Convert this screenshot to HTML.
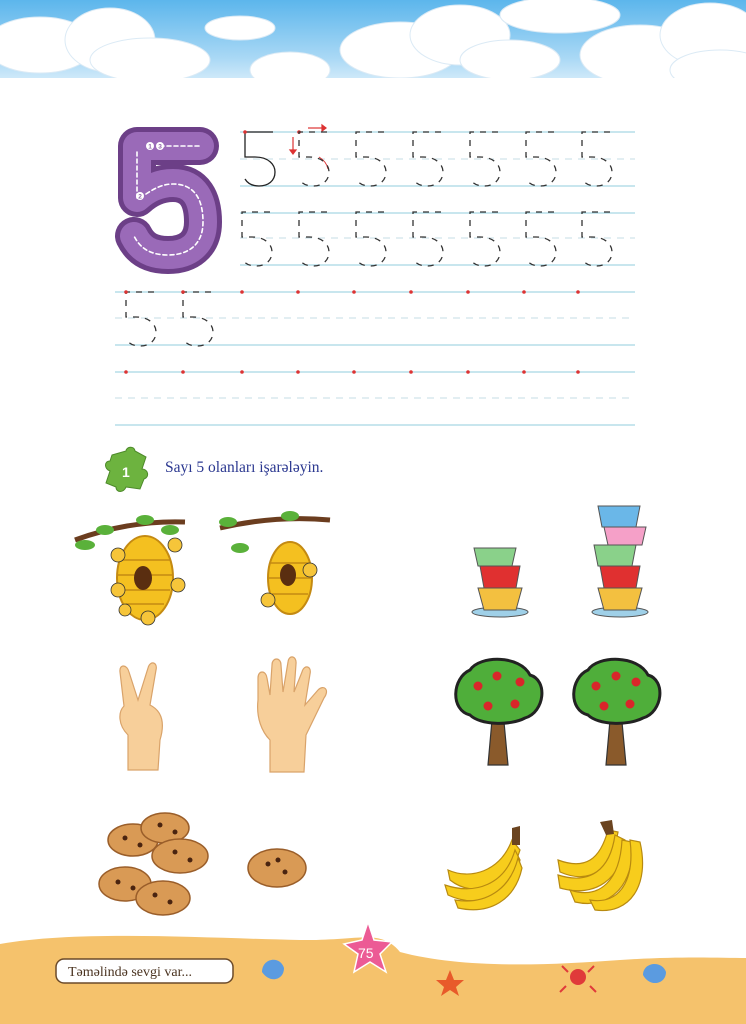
<!DOCTYPE html>
<html><head><meta charset="utf-8"><style>
html,body{margin:0;padding:0}
body{width:746px;height:1024px;position:relative;overflow:hidden;background:#fff;font-family:"Liberation Sans",sans-serif}
.abs{position:absolute}
</style></head><body>
<svg class="abs" style="left:0;top:0" width="746" height="1024" viewBox="0 0 746 1024">
<defs>
<linearGradient id="sky" x1="0" y1="0" x2="0" y2="1">
<stop offset="0" stop-color="#5cb6ec"/><stop offset="0.55" stop-color="#a9d8f5"/><stop offset="1" stop-color="#ffffff"/>
</linearGradient>
<g id="d5" fill="none" stroke="#333" stroke-width="1.3" stroke-dasharray="6,6">
<path d="M28,0 H0 V25 H10 C24,25 30,33 30,40 C30,49 23,54 14,54 C8,54 3,52 0,47"/>
</g>
</defs>
<rect x="0" y="0" width="746" height="105" fill="url(#sky)"/>
<g fill="#fff" stroke="#dbeaf5" stroke-width="1">
<ellipse cx="40" cy="45" rx="55" ry="28"/><ellipse cx="110" cy="40" rx="45" ry="32"/><ellipse cx="150" cy="60" rx="60" ry="22"/>
<ellipse cx="240" cy="28" rx="35" ry="12"/><ellipse cx="290" cy="70" rx="40" ry="18"/>
<ellipse cx="400" cy="50" rx="60" ry="28"/><ellipse cx="460" cy="35" rx="50" ry="30"/><ellipse cx="510" cy="60" rx="50" ry="20"/>
<ellipse cx="560" cy="15" rx="60" ry="18"/><ellipse cx="640" cy="55" rx="60" ry="30"/><ellipse cx="710" cy="35" rx="50" ry="32"/><ellipse cx="720" cy="70" rx="50" ry="20"/>
</g>
<rect x="0" y="78" width="746" height="30" fill="#fff"/>
<!-- lines -->
<g stroke="#a8d6e4" stroke-width="1.2">
<line x1="240" y1="132" x2="635" y2="132"/><line x1="240" y1="186" x2="635" y2="186"/>
<line x1="240" y1="213" x2="635" y2="213"/><line x1="240" y1="265" x2="635" y2="265"/>
<line x1="115" y1="292" x2="635" y2="292"/><line x1="115" y1="345" x2="635" y2="345"/>
<line x1="115" y1="372" x2="635" y2="372"/><line x1="115" y1="425" x2="635" y2="425"/>
</g>
<g stroke="#c6dde6" stroke-width="1" stroke-dasharray="7,6">
<line x1="240" y1="159" x2="635" y2="159"/><line x1="240" y1="238" x2="635" y2="238"/>
<line x1="115" y1="318" x2="635" y2="318"/><line x1="115" y1="398" x2="635" y2="398"/>
</g>
<!-- big 5 -->
<g fill="none" stroke-linecap="round" stroke-linejoin="round">
<path d="M200,146 H137 V198 C150,186 163,183 173,183 C195,183 203,200 203,222 C203,245 188,255 168,255 C150,255 140,248 134,236" stroke="#6c3f87" stroke-width="38"/>
<path d="M200,146 H137 V198 C150,186 163,183 173,183 C195,183 203,200 203,222 C203,245 188,255 168,255 C150,255 140,248 134,236" stroke="#9a6ab8" stroke-width="28"/>
<path d="M160,146 H200 M137,152 V198 M146,194 C155,188 163,184 173,184 C195,184 203,200 203,222 C203,245 188,255 168,255 C150,255 140,248 134,236" stroke="#fff" stroke-width="1.6" stroke-dasharray="4,3"/>
</g>
<g fill="#fff" font-size="7" font-weight="bold"><circle cx="150" cy="146" r="4"/><circle cx="160" cy="146" r="4"/><circle cx="140" cy="196" r="4"/></g>
<g fill="#8e5fa8" font-size="6.5" font-weight="bold" text-anchor="middle"><text x="150" y="148.5">1</text><text x="160" y="148.5">3</text><text x="140" y="198.5">2</text></g>
<!-- row 1 -->
<path d="M273,132 H245 V157 H255 C269,157 275,165 275,172 C275,181 268,186 259,186 C253,186 248,184 245,179" fill="none" stroke="#222" stroke-width="1.3"/>
<circle cx="245" cy="132" r="1.8" fill="#d33"/>
<g stroke="#d33" stroke-width="1.2" fill="#d33"><line x1="308" y1="128" x2="322" y2="128"/><path d="M322,125 L326,128 L322,131Z"/>
<line x1="293" y1="137" x2="293" y2="150"/><path d="M290,150 L293,154 L296,150Z"/></g>
<path d="M319,157 C324,160 327,164 328,169" fill="none" stroke="#d33" stroke-width="1"/>
<circle cx="299" cy="132" r="1.8" fill="#d33"/>
<use href="#d5" x="299" y="132"/><use href="#d5" x="356" y="132"/><use href="#d5" x="413" y="132"/><use href="#d5" x="470" y="132"/><use href="#d5" x="526" y="132"/><use href="#d5" x="582" y="132"/>
<use href="#d5" x="242" y="212"/><use href="#d5" x="299" y="212"/><use href="#d5" x="356" y="212"/><use href="#d5" x="413" y="212"/><use href="#d5" x="470" y="212"/><use href="#d5" x="526" y="212"/><use href="#d5" x="582" y="212"/>
<use href="#d5" x="126" y="292"/><use href="#d5" x="183" y="292"/>
<g fill="#d33">
<circle cx="126" cy="292" r="1.8"/><circle cx="183" cy="292" r="1.8"/><circle cx="242" cy="292" r="1.8"/><circle cx="298" cy="292" r="1.8"/><circle cx="354" cy="292" r="1.8"/><circle cx="411" cy="292" r="1.8"/><circle cx="468" cy="292" r="1.8"/><circle cx="524" cy="292" r="1.8"/><circle cx="578" cy="292" r="1.8"/>
<circle cx="126" cy="372" r="1.8"/><circle cx="183" cy="372" r="1.8"/><circle cx="242" cy="372" r="1.8"/><circle cx="298" cy="372" r="1.8"/><circle cx="354" cy="372" r="1.8"/><circle cx="411" cy="372" r="1.8"/><circle cx="468" cy="372" r="1.8"/><circle cx="524" cy="372" r="1.8"/><circle cx="578" cy="372" r="1.8"/>
</g>
<!-- puzzle -->
<g transform="translate(104,447)">
<path d="M8,8 L22,4 C22,0 30,-2 31,4 L42,10 L38,22 C44,22 46,30 40,32 L36,42 L22,40 C20,46 12,46 12,40 L2,36 L6,24 C0,22 0,14 6,14 Z" fill="#6db33f" stroke="#4d8a2a" stroke-width="1"/>
<text x="18" y="30" font-size="14" fill="#fff" font-weight="bold">1</text>
</g>
<text x="165" y="472" font-family="Liberation Serif, serif" font-size="15.5" fill="#2b3890">Sayı 5 olanları işarələyin.</text>
<!-- beehives -->
<path d="M75,540 Q130,520 185,522" stroke="#6b3d1f" stroke-width="5" fill="none"/>
<g fill="#5ab13a"><ellipse cx="85" cy="545" rx="10" ry="5"/><ellipse cx="105" cy="530" rx="9" ry="5"/><ellipse cx="145" cy="520" rx="9" ry="5"/><ellipse cx="170" cy="530" rx="9" ry="5"/></g>
<ellipse cx="145" cy="578" rx="28" ry="42" fill="#f4c020" stroke="#c48a12" stroke-width="2"/>
<g stroke="#c48a12" stroke-width="1.5" fill="none"><path d="M120,560 H170 M118,575 H172 M120,590 H170 M126,604 H164"/></g>
<ellipse cx="143" cy="578" rx="9" ry="12" fill="#5a2e10"/>
<g fill="#f6c53a" stroke="#333" stroke-width="0.8"><circle cx="118" cy="555" r="7"/><circle cx="175" cy="545" r="7"/><circle cx="118" cy="590" r="7"/><circle cx="178" cy="585" r="7"/><circle cx="148" cy="618" r="7"/><circle cx="125" cy="610" r="6"/></g>
<path d="M220,528 Q275,515 330,520" stroke="#6b3d1f" stroke-width="5" fill="none"/>
<g fill="#5ab13a"><ellipse cx="228" cy="522" rx="9" ry="5"/><ellipse cx="240" cy="548" rx="9" ry="5"/><ellipse cx="290" cy="516" rx="9" ry="5"/></g>
<ellipse cx="290" cy="578" rx="22" ry="36" fill="#f4c020" stroke="#c48a12" stroke-width="2"/>
<g stroke="#c48a12" stroke-width="1.5"><path d="M270,563 H310 M268,578 H312 M272,594 H308"/></g>
<ellipse cx="288" cy="575" rx="8" ry="11" fill="#5a2e10"/>
<g fill="#f6c53a" stroke="#333" stroke-width="0.8"><circle cx="310" cy="570" r="7"/><circle cx="268" cy="600" r="7"/></g>
<!-- cups -->
<g stroke="#555" stroke-width="1">
<ellipse cx="500" cy="612" rx="28" ry="5" fill="#9fd0e8"/>
<path d="M478,588 H522 L516,610 H484Z" fill="#f3c040"/>
<path d="M480,566 H520 L516,588 H484Z" fill="#e03030"/>
<path d="M474,548 H516 L512,566 H478Z" fill="#8ad18a"/>
<ellipse cx="620" cy="612" rx="28" ry="5" fill="#9fd0e8"/>
<path d="M598,588 H642 L636,610 H604Z" fill="#f3c040"/>
<path d="M600,566 H640 L636,588 H604Z" fill="#e03030"/>
<path d="M594,545 H636 L632,566 H598Z" fill="#8ad18a"/>
<path d="M604,527 H646 L642,545 H608Z" fill="#f5a0c8"/>
<path d="M598,506 H640 L636,527 H602Z" fill="#6ab7e8"/>
</g>
<!-- hands -->
<g fill="#f7cf9a" stroke="#d9a36a" stroke-width="1.2">
<path d="M128,770 L128,735 C118,725 118,712 124,706 L120,672 C119,664 127,664 129,672 L138,700 L148,668 C150,660 158,662 156,670 L150,705 C160,710 166,720 160,740 L158,770Z"/>
<path d="M270,772 L270,740 C262,732 256,718 258,700 L258,678 C258,670 266,670 267,678 L270,695 L272,665 C272,657 281,657 281,665 L283,692 L288,662 C289,654 297,656 296,664 L294,692 L302,672 C304,664 312,666 310,674 L305,705 L318,690 C324,684 330,690 324,698 L306,735 L304,772Z"/>
</g>
<!-- trees -->
<path d="M488,765 L492,720 L480,705 L494,712 L498,700 L502,712 L512,705 L504,722 L508,765Z" fill="#8a5a2b" stroke="#333" stroke-width="1.2"/>
<path d="M470,670 C480,655 520,655 530,675 C548,680 545,712 525,718 C510,726 480,725 470,715 C450,710 452,678 470,670Z" fill="#4fae3a" stroke="#222" stroke-width="3"/>
<path d="M606,765 L610,720 L598,705 L612,712 L616,700 L620,712 L630,705 L622,722 L626,765Z" fill="#8a5a2b" stroke="#333" stroke-width="1.2"/>
<path d="M588,670 C598,655 638,655 648,675 C666,680 663,712 643,718 C628,726 598,725 588,715 C568,710 570,678 588,670Z" fill="#4fae3a" stroke="#222" stroke-width="3"/>
<g fill="#d9262a"><circle cx="478" cy="686" r="4.5"/><circle cx="497" cy="676" r="4.5"/><circle cx="520" cy="682" r="4.5"/><circle cx="488" cy="706" r="4.5"/><circle cx="515" cy="704" r="4.5"/>
<circle cx="596" cy="686" r="4.5"/><circle cx="616" cy="676" r="4.5"/><circle cx="636" cy="682" r="4.5"/><circle cx="604" cy="706" r="4.5"/><circle cx="630" cy="704" r="4.5"/></g>
<!-- cookies -->
<g fill="#d99a55" stroke="#9a5e2a" stroke-width="1.5">
<ellipse cx="133" cy="840" rx="25" ry="16"/><ellipse cx="165" cy="828" rx="24" ry="15"/><ellipse cx="180" cy="856" rx="28" ry="17"/>
<ellipse cx="125" cy="884" rx="26" ry="17"/><ellipse cx="163" cy="898" rx="27" ry="17"/>
<ellipse cx="277" cy="868" rx="29" ry="19"/>
</g>
<g fill="#4a2410"><circle cx="125" cy="838" r="2.5"/><circle cx="140" cy="845" r="2.5"/><circle cx="160" cy="825" r="2.5"/><circle cx="175" cy="832" r="2.5"/><circle cx="175" cy="852" r="2.5"/><circle cx="190" cy="860" r="2.5"/><circle cx="118" cy="882" r="2.5"/><circle cx="133" cy="888" r="2.5"/><circle cx="155" cy="895" r="2.5"/><circle cx="170" cy="902" r="2.5"/><circle cx="268" cy="864" r="2.5"/><circle cx="285" cy="872" r="2.5"/><circle cx="278" cy="860" r="2.5"/></g>
<!-- bananas -->
<g fill="#f7cd1c" stroke="#b88a10" stroke-width="1.2">
<path d="M448,870 C470,880 500,872 512,840 L520,850 C510,885 475,900 450,880Z"/>
<path d="M445,885 C475,895 505,885 515,850 L520,860 C512,895 480,910 448,895Z"/>
<path d="M455,900 C485,905 510,890 518,858 L522,868 C515,900 490,915 458,908Z"/>
<path d="M558,860 C585,870 600,860 608,830 L618,832 C612,870 590,885 560,872Z"/>
<path d="M558,875 C590,885 610,870 615,835 L625,840 C622,880 595,898 560,888Z"/>
<path d="M570,890 C600,900 620,880 622,840 L632,842 C635,885 610,910 575,902Z"/>
<path d="M590,900 C620,905 635,880 630,840 L640,842 C650,885 630,915 595,910Z"/>
</g>
<path d="M512,828 L520,826 L520,845 L512,845Z M600,822 L612,820 L614,834 L606,835Z" fill="#6b4420"/>
<!-- sand -->
<path d="M0,944 C80,930 200,938 300,940 C360,941 380,928 400,952 C460,968 540,966 620,960 C680,956 720,958 746,958 V1024 H0Z" fill="#f5c26c"/>
<rect x="56" y="959" width="177" height="24" rx="8" fill="#fff" stroke="#6b4a2a" stroke-width="1.5"/>
<text x="68" y="976" font-family="Liberation Serif, serif" font-size="14" fill="#4a3320">Təməlində sevgi var...</text>
<path d="M368,922 L374,940 L392,942 L380,954 L386,972 L370,962 L354,972 L358,954 L344,944 L362,940Z" fill="#ec5b95" stroke="#fff" stroke-width="1.5"/>
<text x="358" y="958" font-size="14" fill="#fff">75</text>
<path d="M450,970 L454,980 L464,980 L456,987 L459,996 L450,990 L441,996 L444,987 L436,980 L446,980Z" fill="#e85a2a"/>
<circle cx="578" cy="977" r="8" fill="#e03a3a"/>
<path d="M562,966 L568,972 M594,966 L588,972 M566,986 L560,992 M590,986 L596,992" stroke="#e03a3a" stroke-width="2"/>
<path d="M262,972 C262,958 280,955 284,968 C284,980 270,984 262,972Z" fill="#5b9be0"/>
<path d="M643,975 C643,962 662,960 666,972 C666,984 650,988 643,975Z" fill="#5b9be0"/>
</svg>
</body></html>
